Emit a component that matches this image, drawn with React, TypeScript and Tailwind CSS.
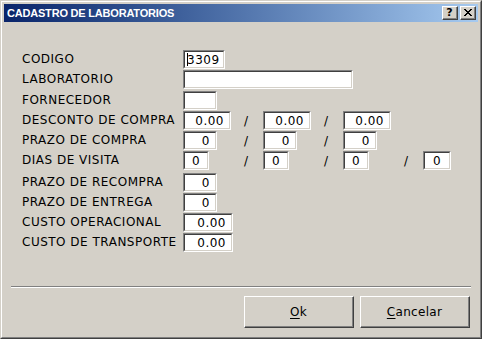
import React from "react";

const font = { fontFamily: '"DejaVu Sans", Verdana, sans-serif' };

function Field({
  w,
  value = "",
  align = "right",
  caret = false,
}: {
  w: string;
  value?: string;
  align?: "left" | "right" | "center";
  caret?: boolean;
}) {
  const alignCls =
    align === "left" ? "justify-start pl-[2px]" : align === "center" ? "justify-center" : "justify-end pr-[5px]";
  return (
    <div className={`${w} h-[19px] shrink-0 border-t border-l border-t-[#808080] border-l-[#808080] border-b border-r border-b-white border-r-white`}>
      <div className="h-full border-t border-l border-t-[#404040] border-l-[#404040] border-b border-r border-b-[#d4d0c8] border-r-[#d4d0c8] bg-white">
        <div className={`flex h-full items-center ${alignCls} text-[12px] tracking-[0.5px] text-black`}>
          {caret && <span className="mr-[-1px] h-[13px] w-px bg-black" />}
          {value}
        </div>
      </div>
    </div>
  );
}

// one 80px column: field, then a slash centred 63px from the column start
function Cell({ children, slash = true }: { children: React.ReactNode; slash?: boolean }) {
  return (
    <div className="flex w-[80px] items-center">
      {children}
      <div className="flex-1" />
      {slash && <div className="w-[14px] text-center text-[12px] text-black">/</div>}
      {slash && <div className="w-[10px]" />}
    </div>
  );
}

function Row({ label, h = "h-[20px]", children }: { label: string; h?: string; children: React.ReactNode }) {
  return (
    <div className={`flex ${h} items-start`}>
      <div className="w-[161px] pt-[1px] text-[12px] leading-[16px] tracking-[0.5px] text-black">{label}</div>
      <div className="flex items-center">{children}</div>
    </div>
  );
}

function Button({ children }: { children: React.ReactNode }) {
  return (
    <div className="h-[32px] w-[110px] border-t border-l border-t-white border-l-white border-b border-r border-b-[#404040] border-r-[#404040]">
      <div className="flex h-full items-center justify-center border-b border-r border-b-[#808080] border-r-[#808080] text-[12px] tracking-[0.3px] text-black">
        {children}
      </div>
    </div>
  );
}

export default function App() {
  return (
    <div className="h-[339px] w-[482px] overflow-hidden bg-[#d4d0c8]" style={font}>
      <div className="h-full border-t border-l border-t-[#d4d0c8] border-l-[#d4d0c8] border-b border-r border-b-[#404040] border-r-[#404040]">
        <div className="flex h-full flex-col border-t border-l border-t-white border-l-white border-b border-r border-b-[#808080] border-r-[#808080] p-[2px]">
          {/* title bar */}
          <div className="flex h-[18px] items-center justify-between bg-gradient-to-r from-[#0a246a] to-[#a6caf0] pl-[3px] pr-[2px]">
            <span
              className="text-[11px] font-bold tracking-[-0.2px] text-white"
              style={{ fontFamily: '"Liberation Sans", Arial, sans-serif' }}
            >
              CADASTRO DE LABORATORIOS
            </span>
            <div className="flex gap-[2px]">
              <div className="h-[14px] w-[16px] border-t border-l border-t-white border-l-white border-b border-r border-b-[#404040] border-r-[#404040] bg-[#d4d0c8]">
                <div className="flex h-full items-center justify-center border-b border-r border-b-[#808080] border-r-[#808080] text-[11px] font-bold leading-none text-black">
                  ?
                </div>
              </div>
              <div className="h-[14px] w-[16px] border-t border-l border-t-white border-l-white border-b border-r border-b-[#404040] border-r-[#404040] bg-[#d4d0c8]">
                <div className="flex h-full items-center justify-center border-b border-r border-b-[#808080] border-r-[#808080]">
                  <svg width="8" height="7" viewBox="0 0 8 7">
                    <path d="M0 0h2v1h-2zM6 0h2v1h-2zM1 1h2v1h-2zM5 1h2v1h-2zM2 2h4v1h-4zM3 3h2v1h-2zM2 4h4v1h-4zM1 5h2v1h-2zM5 5h2v1h-2zM0 6h2v1h-2zM6 6h2v1h-2z" fill="#000" />
                  </svg>
                </div>
              </div>
            </div>
          </div>

          {/* form */}
          <div className="pl-[18px] pt-[28px]">
            <Row label="CODIGO">
              <Field w="w-[42px]" value="3309" align="left" caret />
            </Row>
            <Row label="LABORATORIO" h="h-[21px]">
              <Field w="w-[170px]" />
            </Row>
            <Row label="FORNECEDOR">
              <Field w="w-[34px]" />
            </Row>
            <Row label="DESCONTO DE COMPRA">
              <Cell>
                <Field w="w-[48px]" value="0.00" />
              </Cell>
              <Cell>
                <Field w="w-[48px]" value="0.00" />
              </Cell>
              <Field w="w-[48px]" value="0.00" />
            </Row>
            <Row label="PRAZO DE COMPRA">
              <Cell>
                <Field w="w-[34px]" value="0" />
              </Cell>
              <Cell>
                <Field w="w-[34px]" value="0" />
              </Cell>
              <Field w="w-[34px]" value="0" />
            </Row>
            <Row label="DIAS DE VISITA" h="h-[22px]">
              <Cell>
                <Field w="w-[26px]" value="0" align="center" />
              </Cell>
              <Cell>
                <Field w="w-[26px]" value="0" align="center" />
              </Cell>
              <Cell>
                <Field w="w-[26px]" value="0" align="center" />
              </Cell>
              <Field w="w-[28px]" value="0" align="center" />
            </Row>
            <Row label="PRAZO DE RECOMPRA">
              <Field w="w-[34px]" value="0" />
            </Row>
            <Row label="PRAZO DE ENTREGA">
              <Field w="w-[34px]" value="0" />
            </Row>
            <Row label="CUSTO OPERACIONAL">
              <Field w="w-[50px]" value="0.00" />
            </Row>
            <Row label="CUSTO DE TRANSPORTE">
              <Field w="w-[50px]" value="0.00" />
            </Row>
          </div>

          <div className="flex-1" />

          {/* separator */}
          <div className="mx-[7px] border-t border-b border-t-[#808080] border-b-white" />

          <div className="flex justify-end gap-[6px] pb-[7px] pr-[8px] pt-[8px]">
            <Button>
              <span className="underline underline-offset-2">O</span>k
            </Button>
            <Button>
              <span className="underline underline-offset-2">C</span>ancelar
            </Button>
          </div>
        </div>
      </div>
    </div>
  );
}
